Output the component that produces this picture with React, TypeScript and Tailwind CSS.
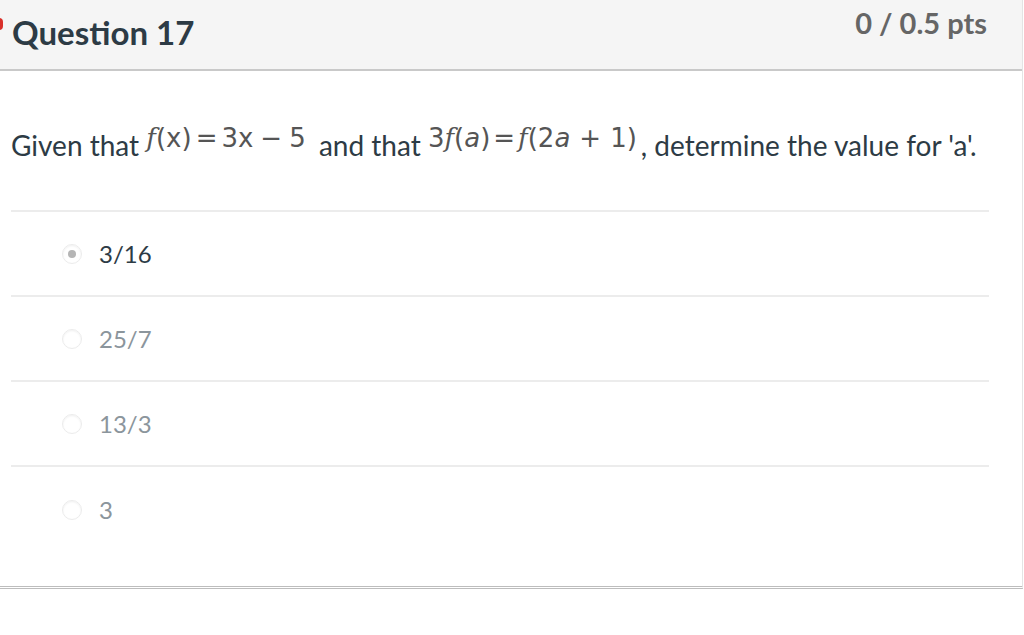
import React from "react";

const Radio = ({ checked }: { checked?: boolean }) => (
  <span className="relative inline-flex h-[20px] w-[20px] items-center justify-center rounded-full border border-[#ececec] bg-white shadow-[inset_0_1px_2px_rgba(0,0,0,0.06)]">
    {checked && <span className="h-[8px] w-[8px] rounded-full bg-[#b5b5b5]" />}
  </span>
);

const answers = [
  { t: "3/16", checked: true },
  { t: "25/7" },
  { t: "13/3" },
  { t: "3" },
];

const F = () => <i style={{ fontFamily: "'DejaVu Serif', serif" }}>f</i>;

export default function App() {
  return (
    <div className="h-[635px] w-[1024px] bg-white" style={{ fontFamily: "Lato, 'Open Sans', sans-serif" }}>
      <div className="relative w-[1023px] border-r border-b-[3px] border-r-[#e4e4e4] border-b-[#bdbdbd] bg-white" style={{ borderBottomStyle: "double" }}>
        <div className="relative flex h-[71px] items-start justify-between border-b-2 border-[#c9c9c9] bg-[#f5f5f5] pl-[12px] pr-[35px]">
          <span className="absolute left-[-5px] top-[18px] h-[12px] w-[8px] rounded-full bg-[#d9302a]" />
          <h2 className="mt-[11px] text-[33px] font-bold leading-[42px] text-[#2d3b45]">Question 17</h2>
          <span className="mt-[4px] text-[29px] font-bold leading-[38px] text-[#666666]">0 / 0.5 pts</span>
        </div>
        <div className="px-[11px] pb-[34px] pt-[56px]">
          <p className="text-[28px] leading-[36px] text-[#2d3b45] whitespace-nowrap">
            Given that{" "}
            <span className="relative top-[-9px] text-[26px] text-[#555555]" style={{ fontFamily: "'DejaVu Sans', sans-serif" }}>
              <F />(x)<span className="mx-[4px]">=</span>3x<span className="mx-[7px]">−</span>5
            </span>{" "}
            <span className="ml-[6px]">and that</span>{" "}
            <span className="relative top-[-9px] text-[26px] text-[#555555]" style={{ fontFamily: "'DejaVu Sans', sans-serif" }}>
              3<F />(<i>a</i>)<span className="mx-[3px]">=</span><F />(2<i>a</i><span className="mx-[9px]">+</span>1)
            </span>
            <span className="ml-[4px]">, determine the value for 'a'.</span>
          </p>
          <div className="mt-[45px] mr-[22px] border-t-2 border-[#ececec]">
            {answers.map((a, i) => (
              <div key={a.t} className={`flex h-[85px] items-center pl-[51px] ${i < answers.length - 1 ? "border-b-2 border-[#ececec]" : ""}`}>
                <Radio checked={a.checked} />
                <span className={`ml-[17px] text-[24px] ${a.checked ? "text-[#2d3b45]" : "text-[#8b959c]"}`}>{a.t}</span>
              </div>
            ))}
          </div>
        </div>
      </div>
    </div>
  );
}
